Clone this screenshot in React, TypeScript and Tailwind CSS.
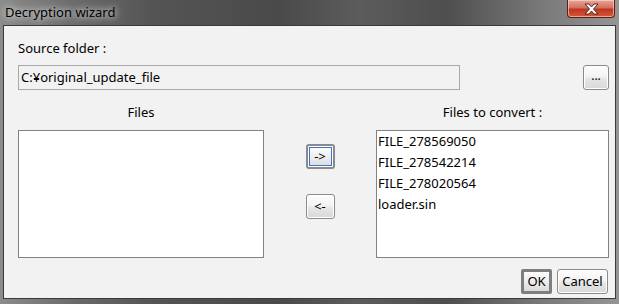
import type { ReactNode } from "react";

const FILES_TO_CONVERT = ["FILE_278569050", "FILE_278542214", "FILE_278020564", "loader.sin"];

function WinButton({ children, className = "" }: { children: ReactNode; className?: string }) {
  return (
    <button
      className={`flex items-center justify-center rounded-[3px] border border-[#8a8a8a] bg-[linear-gradient(180deg,#fdfdfd_0%,#f3f3f3_45%,#e6e6e6_55%,#d8d8d8_100%)] shadow-[inset_0_0_0_1px_#ffffff] text-black ${className}`}
    >
      {children}
    </button>
  );
}

function CloseGlyph() {
  return (
    <svg width="15" height="12" viewBox="0 0 15 12">
      <polygon
        points="1,1 5,1 7.5,4 10,1 14,1 9.5,6 14,11 10,11 7.5,8 5,11 1,11 5.5,6"
        fill="#ffffff"
        stroke="#4a2a24"
        strokeWidth="1"
        strokeLinejoin="round"
      />
    </svg>
  );
}

export default function App() {
  return (
    <div className="w-[619px] h-[304px] flex flex-col bg-[linear-gradient(90deg,#8c8c8c_0%,#6a6a6a_12%,#545454_25%,#4a4a4a_45%,#5c5c5c_58%,#4e4e4e_72%,#7a7a7a_88%,#959595_100%)] font-['Noto_Sans',sans-serif] text-[13px] text-black">
      <div className="h-[25px] flex items-start justify-between">
        <span className="pl-[5px] pt-[4px] leading-[16px] text-[13px] text-black [text-shadow:0_0_6px_rgba(255,255,255,0.9),0_0_12px_rgba(255,255,255,0.6)]">
          Decryption wizard
        </span>
        <div className="mr-[4px] w-[48px] h-[18px] flex items-center justify-center rounded-b-[4px] border border-t-0 border-[#5a2018] bg-[linear-gradient(180deg,#e9a898_0%,#d27060_45%,#c0361e_55%,#d4583a_100%)] shadow-[inset_0_0_0_1px_rgba(255,220,210,0.6)]">
          <CloseGlyph />
        </div>
      </div>

      <div className="mx-[3px] mb-[5px] flex-1 flex flex-col border border-[#3a3a3a] bg-[#f2f2f2] pl-[14px] pr-[6px] pt-[14px]">
        <div className="h-[16px] leading-[16px]">Source folder :</div>

        <div className="mt-[9px] flex items-center justify-between">
          <div className="w-[442px] h-[25px] flex items-center border border-[#a8a8a8] px-[2px]">
            C:¥original_update_file
          </div>
          <WinButton className="w-[26px] h-[25px] text-[#1d4fa8] text-[12px] leading-none pb-[3px]">...</WinButton>
        </div>

        <div className="mt-[14px] grid grid-cols-[246px_1fr_233px] h-[16px] leading-[16px]">
          <div className="text-center">Files</div>
          <div />
          <div className="text-center">Files to convert :</div>
        </div>

        <div className="mt-[10px] grid grid-cols-[246px_1fr_233px] h-[128px]">
          <div className="border border-[#828282] bg-white" />
          <div className="flex flex-col items-center pt-[14px] gap-[25px]">
            <div className="w-[29px] h-[25px] rounded-[3px] border-2 border-[#8a8a8a] bg-white p-[1px]">
              <div className="w-full h-full flex items-center justify-center border border-[#3c72d2] bg-[linear-gradient(180deg,#fbfbfb_0%,#efefef_50%,#dddddd_100%)] leading-none">
                -&gt;
              </div>
            </div>
            <WinButton className="w-[29px] h-[25px] leading-none">&lt;-</WinButton>
          </div>
          <div className="border border-[#828282] bg-white pl-[1px]">
            {FILES_TO_CONVERT.map((name) => (
              <div key={name} className="h-[21px] leading-[21px]">
                {name}
              </div>
            ))}
          </div>
        </div>

        <div className="mt-[11px] mr-[1px] flex justify-end gap-[5px]">
          <button className="w-[31px] h-[25px] flex items-center justify-center rounded-[2px] border-[3px] border-[#7e7e7e] bg-[linear-gradient(180deg,#fbfbfb_0%,#eeeeee_50%,#dadada_100%)] text-[13px] leading-none">
            OK
          </button>
          <WinButton className="w-[51px] h-[25px] text-[13px] leading-none">Cancel</WinButton>
        </div>
      </div>
    </div>
  );
}
